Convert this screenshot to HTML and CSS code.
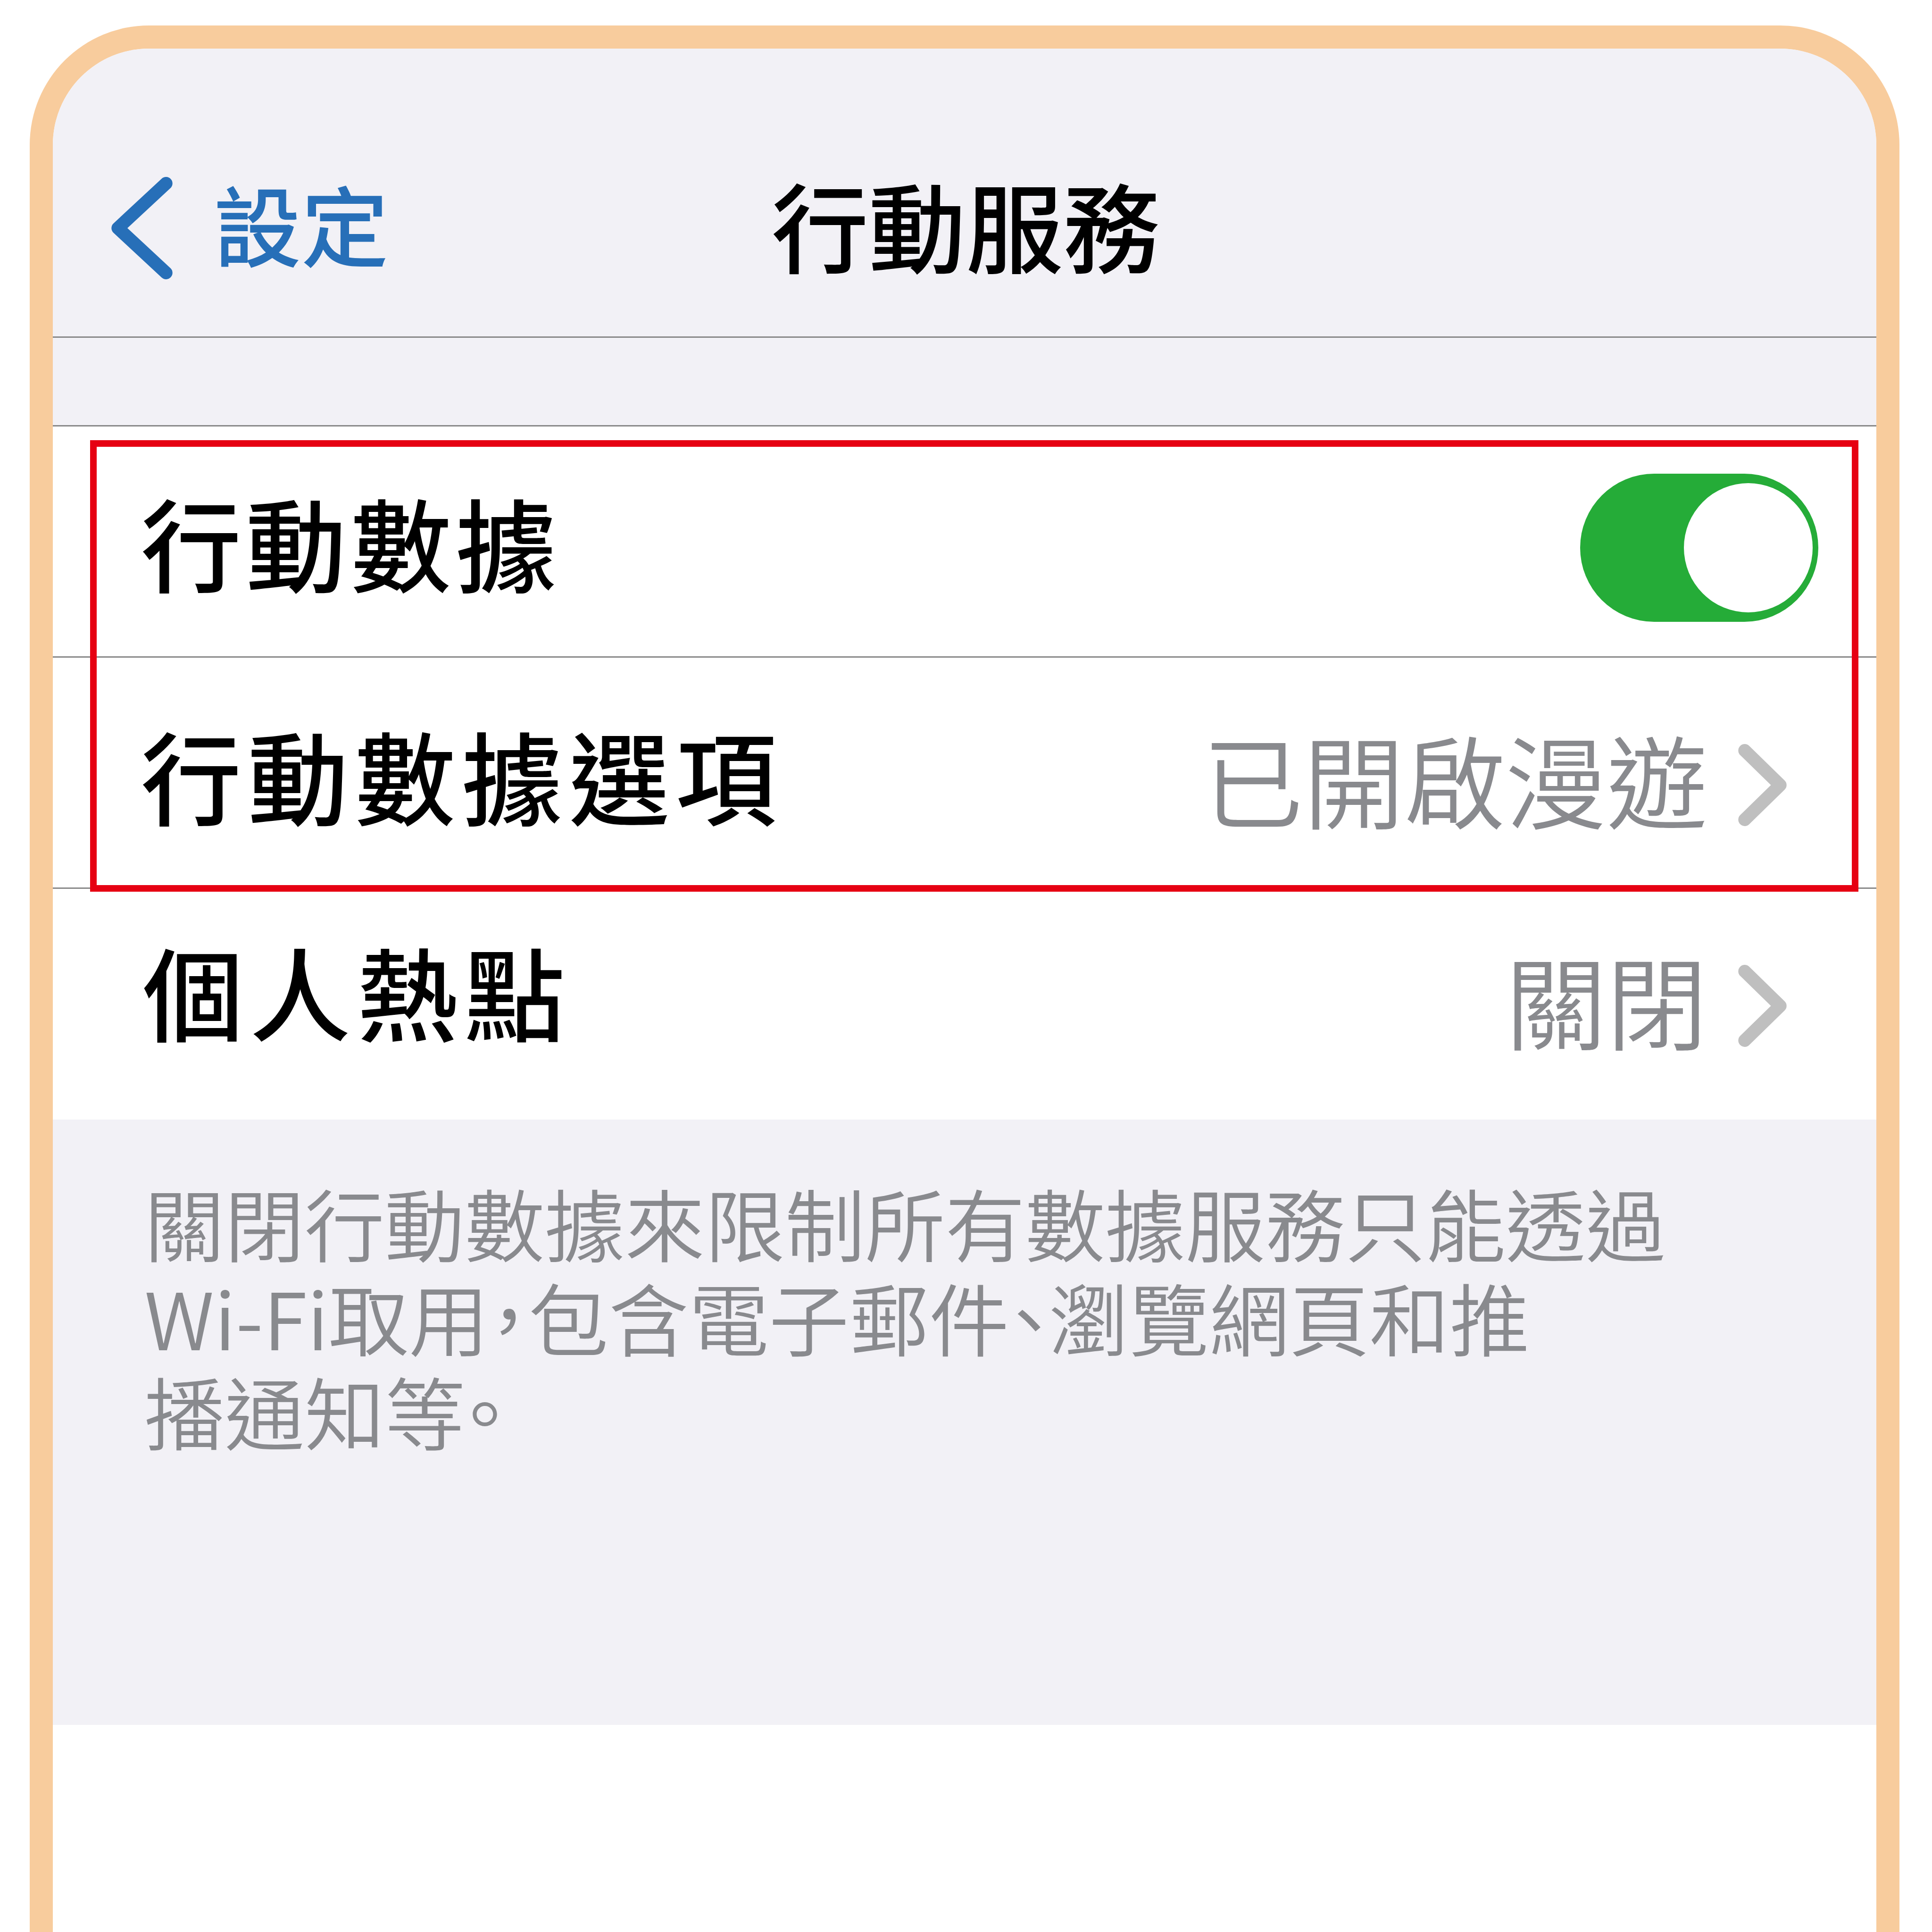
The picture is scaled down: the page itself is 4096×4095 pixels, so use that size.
FILE: index.html
```html
<!DOCTYPE html>
<html lang="zh-Hant">
<head>
<meta charset="utf-8">
<title>行動服務</title>
<link rel="stylesheet" href="styles.css">
</head>
<body>
<div class="phone">
  <header class="navbar">
    <a class="back">
      <svg class="back-icon" viewBox="0 0 130 217"><path d="M116 13.8L14 108.5L116 203.2"/></svg>
      <span class="back-label">設定</span>
    </a>
    <h1 class="title">行動服務</h1>
  </header>
  <div class="spacer"></div>
  <main class="list">
    <div class="row row-data">
      <span class="label">行動數據</span>
      <span class="switch"><span class="knob"></span></span>
    </div>
    <div class="row row-options">
      <span class="label">行動數據選項</span>
      <span class="value">已開啟漫遊</span>
      <svg class="chevron" viewBox="0 0 103 174"><path d="M14 13.8L89 87L14 160.2"/></svg>
    </div>
    <div class="row row-hotspot">
      <span class="label">個人熱點</span>
      <span class="value">關閉</span>
      <svg class="chevron" viewBox="0 0 103 174"><path d="M14 13.8L89 87L14 160.2"/></svg>
    </div>
    <div class="highlight"></div>
  </main>
  <footer class="note">
    <p class="tight">關閉行動數據來限制所有數據服務只能透過</p>
    <p>Wi-Fi取用<span class="punct">，</span>包含電子郵件<span class="punct">、</span>瀏覽網頁和推</p>
    <p>播通知等<span class="punct">。</span></p>
  </footer>
</div>
</body>
</html>
```
FILE: styles.css
```css
* { box-sizing: border-box; margin: 0; padding: 0; }

body {
  width: 4096px;
  height: 4095px;
  padding: 54px 69px 0 63px;
  background: #fff;
  font-family: "Noto Sans CJK TC", "Noto Sans", sans-serif;
  overflow: hidden;
}

/* Device frame, open at the bottom */
.phone {
  height: 4041px;
  border: 49px solid #f8cc9d;
  border-bottom: 0;
  border-radius: 253px 253px 0 0;
  background: #fff;
  overflow: hidden;
}

/* Navigation bar */
.navbar {
  display: grid;
  grid-template-columns: 1fr auto 1fr;
  align-items: center;
  height: 613px;
  padding: 151px 0 0 5.4px;
  border-bottom: 3px solid #898989;
  background: #f2f1f6;
}
.back {
  display: flex;
  align-items: center;
  justify-self: start;
  gap: 87.7px;
  height: 217px;
  margin-left: 118.2px;
  color: #276fb8;
}
.back-icon { width: 130px; height: 217px; }
.back-icon path,
.chevron path {
  fill: none;
  stroke: currentColor;
  stroke-width: 27.4;
  stroke-linecap: round;
  stroke-linejoin: round;
}
.back-label {
  margin-bottom: 23.4px;
  font-size: 185.3px;
  line-height: 217px;
  font-weight: 500;
  white-space: nowrap;
}
.title {
  margin-bottom: 21.4px;
  font-size: 206.1px;
  line-height: 300px;
  font-weight: 500;
  white-space: nowrap;
}
.spacer { height: 185px; background: #f2f1f6; }

/* Settings rows */
.list { position: relative; border-top: 3px solid #898989; }
.row {
  display: flex;
  align-items: center;
  height: 490px;
  padding: 0 190px 0 186.4px;
  border-bottom: 3px solid #898989;
}
.label {
  margin-right: auto;
  font-size: 213.4px;
  line-height: 300px;
  font-weight: 500;
  white-space: nowrap;
}
.value {
  margin-right: 65px;
  font-size: 214.2px;
  line-height: 300px;
  font-weight: 350;
  color: #898a8e;
  white-space: nowrap;
}
.chevron { width: 103px; height: 174px; color: #bfbfbf; }

.row-data { padding-right: 123px; }
.row-data .label { margin-bottom: 3.4px; letter-spacing: 9.2px; }
.row-options .label { margin-top: 5.8px; letter-spacing: 13.5px; }
.row-options .value { margin-top: 20px; }
.row-options .chevron { margin-top: 53px; }
.row-hotspot { height: 489px; padding-left: 190.6px; border-bottom: 0; }
.row-hotspot .label { margin-bottom: 61px; letter-spacing: 13.8px; }
.row-hotspot .value { margin-bottom: 24.6px; }
.row-hotspot .chevron { margin-top: 7.8px; }

.switch {
  display: flex;
  justify-content: flex-end;
  width: 505px;
  height: 314px;
  margin-top: 26px;
  padding: 20px 12px;
  border-radius: 157px;
  background: #25ac38;
}
.knob { width: 273px; height: 274px; border-radius: 50%; background: #fff; }

.highlight {
  position: absolute;
  left: 79px;
  top: 29px;
  width: 3749px;
  height: 957px;
  border: 14px solid #e60012;
}

/* Explanatory note */
.note {
  height: 1283px;
  padding: 116.8px 0 0 193.8px;
  background: #f2f1f6;
  color: #898a8e;
  font-size: 166.5px;
  line-height: 199.7px;
  font-weight: 350;
  white-space: nowrap;
}
.note p { transform: scaleX(1.0204); transform-origin: 0 0; }
.note .tight { letter-spacing: -0.15px; }

/* Half-width punctuation */
.punct { margin: 0 -0.5px; font-feature-settings: "halt"; }
```
